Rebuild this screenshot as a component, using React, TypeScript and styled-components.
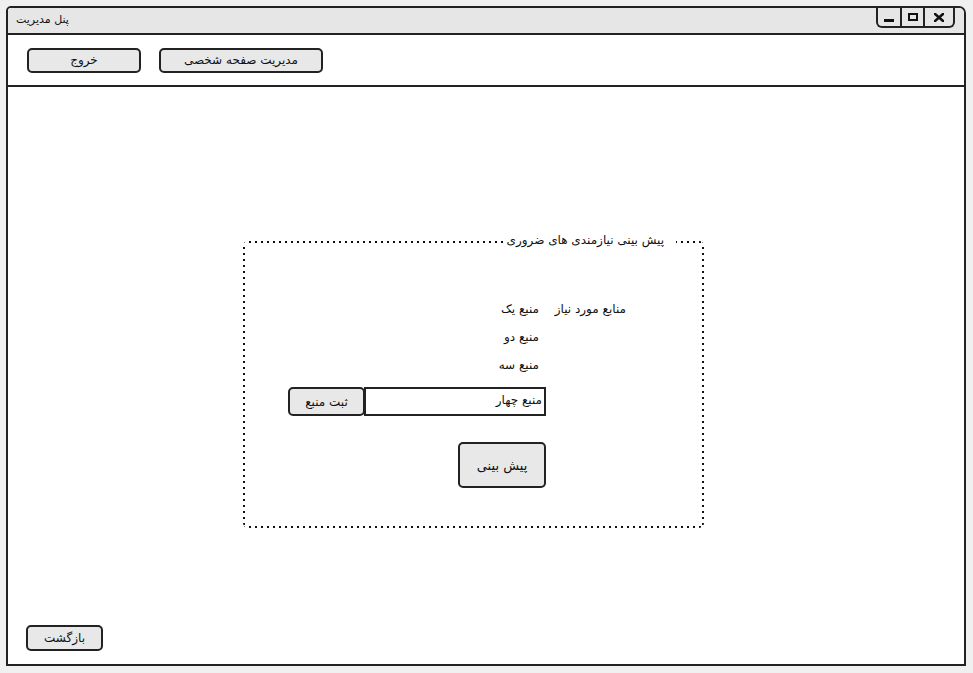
import React from 'react'
import styled, { createGlobalStyle } from 'styled-components'

const GlobalStyle = createGlobalStyle`
  html, body {
    margin: 0;
    padding: 0;
    background: #f0f0f0;
  }
  body {
    font-family: "DejaVu Sans", sans-serif;
    color: #111;
  }
`

const Page = styled.div`
  padding: 6px;
`

const Window = styled.div`
  width: 960px;
  height: 660px;
  box-sizing: border-box;
  border: 2px solid #222;
  border-radius: 5px 7px 0 0;
  background: #fff;
  display: flex;
  flex-direction: column;
  overflow: hidden;
`

const TitleBar = styled.div`
  height: 25px;
  border-bottom: 2px solid #222;
  background: #e6e6e6;
  display: flex;
  justify-content: space-between;
  align-items: flex-start;
`

const Title = styled.span`
  font-size: 11px;
  line-height: 24px;
  padding-left: 8px;
`

const Controls = styled.div`
  display: flex;
  height: 18px;
  margin-right: 9px;
  border: 2px solid #222;
  border-top: none;
  border-radius: 0 0 6px 6px;
`

const ControlCell = styled.div<{ w: number }>`
  width: ${({ w }) => w}px;
  display: flex;
  align-items: center;
  justify-content: center;
  & + & {
    border-left: 2px solid #222;
  }
`

const Toolbar = styled.div`
  height: 50px;
  border-bottom: 2px solid #222;
  padding: 0 19px;
  display: flex;
  align-items: center;
  gap: 18px;
`

const Button = styled.button<{ w: number; h: number }>`
  width: ${({ w }) => w}px;
  height: ${({ h }) => h}px;
  flex-shrink: 0;
  box-sizing: border-box;
  border: 2px solid #222;
  border-radius: 5px;
  background: #e8e8e8;
  font-family: "DejaVu Sans", sans-serif;
  font-size: 12px;
  color: #111;
  padding: 0;
  cursor: pointer;
`

const Content = styled.div`
  flex: 1;
  display: flex;
  flex-direction: column;
  align-items: flex-start;
`

const Group = styled.div`
  margin: 154px 0 0 235px;
  width: 461px;
  height: 287px;
  box-sizing: border-box;
  display: flex;
  flex-direction: column;
  align-items: flex-start;
  background:
    repeating-linear-gradient(to right, #111 0 2px, transparent 2px 6px) top / 100% 2px no-repeat,
    repeating-linear-gradient(to right, #111 0 2px, transparent 2px 6px) bottom / 100% 2px no-repeat,
    repeating-linear-gradient(to bottom, #111 0 2px, transparent 2px 6px) left / 2px 100% no-repeat,
    repeating-linear-gradient(to bottom, #111 0 2px, transparent 2px 6px) right / 2px 100% no-repeat,
    #fff;
  border-radius: 5px;
`

const Legend = styled.div`
  margin: -9px 28px 0 0;
  padding: 0 12px 0 4px;
  background: #fff;
  font-size: 12px;
  line-height: 16px;
`

const GroupBody = styled.div`
  margin-top: 53px;
  padding-right: 78px;
  display: flex;
  gap: 12px;
  align-items: flex-start;
`

const FieldLabel = styled.div`
  width: 68px;
  white-space: nowrap;
  font-size: 12px;
  line-height: 16px;
`

const Column = styled.div`
  width: 258px;
  display: flex;
  flex-direction: column;
  align-items: flex-start;
`

const List = styled.ul`
  list-style: none;
  margin: 0;
  padding: 0 7px 0 0;
  display: flex;
  flex-direction: column;
  gap: 12px;
`

const ListItem = styled.li`
  font-size: 12px;
  line-height: 16px;
`

const InputRow = styled.div`
  margin-top: 14px;
  width: 100%;
  height: 29px;
  display: flex;
  direction: ltr;
`

const TextInput = styled.input`
  flex: 1;
  min-width: 0;
  height: 29px;
  box-sizing: border-box;
  margin: 0 0 0 -1px;
  border: 2px solid #222;
  padding: 0 2px 4px;
  direction: rtl;
  font-family: "DejaVu Sans", sans-serif;
  font-size: 12px;
  color: #111;
  outline: none;
`

const PredictButton = styled(Button)`
  margin-top: 26px;
  font-size: 13px;
`

const BackButton = styled(Button)`
  margin: auto 0 13px 18px;
`

const MinimizeIcon = () => (
  <svg width="10" height="12" viewBox="0 0 10 12">
    <rect x="0" y="8" width="10" height="3" fill="#111" />
  </svg>
)

const MaximizeIcon = () => (
  <svg width="10" height="9" viewBox="0 0 10 9">
    <rect x="1" y="1" width="8" height="6" fill="none" stroke="#111" strokeWidth="2" />
  </svg>
)

const CloseIcon = () => (
  <svg width="10" height="9" viewBox="0 0 10 9">
    <path d="M1 1 L9 8 M9 1 L1 8" stroke="#111" strokeWidth="2.6" strokeLinecap="square" />
  </svg>
)

const resources = ['منبع یک', 'منبع دو', 'منبع سه']

const App = () => {
  return (
    <Page>
      <GlobalStyle />
      <Window>
        <TitleBar>
          <Title>پنل مدیریت</Title>
          <Controls>
            <ControlCell w={22}>
              <MinimizeIcon />
            </ControlCell>
            <ControlCell w={21}>
              <MaximizeIcon />
            </ControlCell>
            <ControlCell w={28}>
              <CloseIcon />
            </ControlCell>
          </Controls>
        </TitleBar>
        <Toolbar>
          <Button w={114} h={25}>خروج</Button>
          <Button w={164} h={25}>مدیریت صفحه شخصی</Button>
        </Toolbar>
        <Content>
          <Group dir="rtl">
            <Legend>پیش بینی نیازمندی های ضروری</Legend>
            <GroupBody>
              <FieldLabel>منابع مورد نیاز</FieldLabel>
              <Column>
                <List>
                  {resources.map((r) => (
                    <ListItem key={r}>{r}</ListItem>
                  ))}
                </List>
                <InputRow>
                  <Button w={77} h={29}>ثبت منبع</Button>
                  <TextInput defaultValue="منبع چهار" />
                </InputRow>
                <PredictButton w={88} h={46}>پیش بینی</PredictButton>
              </Column>
            </GroupBody>
          </Group>
          <BackButton w={77} h={26}>بازگشت</BackButton>
        </Content>
      </Window>
    </Page>
  )
}

export default App
